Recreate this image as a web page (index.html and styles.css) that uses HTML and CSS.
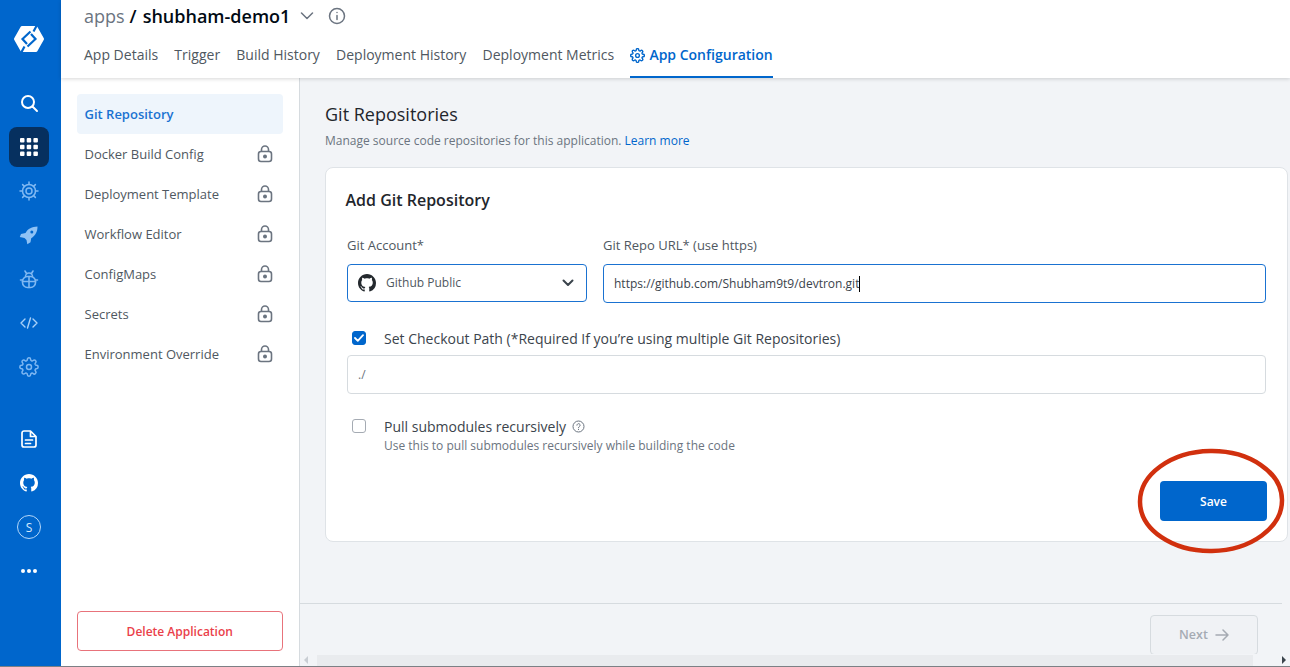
FILE: index.html
```html
<!DOCTYPE html>
<html lang="en">
<head>
  <meta charset="UTF-8">
  <title>shubham-demo1 - App Configuration</title>
  <link rel="stylesheet" href="styles.css">
</head>
<body>
  <aside class="sidebar">
    <div class="logo">
      <svg width="32" height="28" viewBox="0 0 32 28">
        <path d="M9 2.500h14l6.500 11.500-6.500 11.500H9L2.500 14z" fill="#fff" stroke="#fff" stroke-width="3" stroke-linejoin="round"/>
        <path d="M24 0 20.500 6.500M8 28l3.500-6.500" stroke="#0066cc" stroke-width="2.200"/>
        <path d="M17.500 6.500 9.500 14l4.500 5M14.500 21.500l8-7.500-4.500-5" fill="none" stroke="#0066cc" stroke-width="2.200"/>
      </svg>
    </div>
    <div class="side-item">
      <svg width="20" height="20" viewBox="0 0 20 20" fill="none" stroke="#fff" stroke-width="2" stroke-linecap="round"><circle cx="9" cy="9" r="6"/><path d="m13.500 13.500 4.500 4.500"/></svg>
    </div>
    <div class="side-item">
      <div class="side-active">
        <svg width="18" height="18" viewBox="0 0 18 18" fill="#fff">
          <rect x="0" y="0" width="4.500" height="4.500" rx="1"/><rect x="6.700" y="0" width="4.500" height="4.500" rx="1"/><rect x="13.400" y="0" width="4.500" height="4.500" rx="1"/>
          <rect x="0" y="6.700" width="4.500" height="4.500" rx="1"/><rect x="6.700" y="6.700" width="4.500" height="4.500" rx="1"/><rect x="13.400" y="6.700" width="4.500" height="4.500" rx="1"/>
          <rect x="0" y="13.400" width="4.500" height="4.500" rx="1"/><rect x="6.700" y="13.400" width="4.500" height="4.500" rx="1"/><rect x="13.400" y="13.400" width="4.500" height="4.500" rx="1"/>
        </svg>
      </div>
    </div>
    <div class="side-item">
      <svg width="20" height="20" viewBox="0 0 20 20" fill="none" stroke="#7fb8f2" stroke-width="1.500" stroke-linecap="round"><circle cx="10" cy="10" r="6.500"/><circle cx="10" cy="10" r="3"/><path d="M10 1v2.500M10 16.500V19M1 10h2.500M16.500 10H19M3.600 3.600l1.800 1.800M14.600 14.600l1.800 1.800M16.400 3.600l-1.800 1.800M5.400 14.600l-1.800 1.800"/></svg>
    </div>
    <div class="side-item">
      <svg width="20" height="20" viewBox="0 0 20 20"><path fill="#8fc2f5" d="M18.500 1.500c-5.500.2-9.500 2-12 6.500L2 9 .8 12l4.700 1 2 2 .8 4.300 3.200-2 .7-4.100c4.300-2.700 6.300-6.500 6.300-11.700z"/><circle cx="12.800" cy="7" r="1.500" fill="#0066cc"/></svg>
    </div>
    <div class="side-item">
      <svg width="20" height="20" viewBox="0 0 20 20" fill="none" stroke="#7fb8f2" stroke-width="1.600" stroke-linecap="round"><rect x="3.500" y="7.500" width="13" height="11" rx="5"/><path d="M6.500 7.500a3.500 3.500 0 0 1 7 0M10 7.500v11M3.500 12.500h13M1.500 11h2M16.500 11h2M6 2 7.500 4.500M14 2l-1.500 2.500"/></svg>
    </div>
    <div class="side-item">
      <svg width="18" height="12" viewBox="0 0 18 12" fill="none" stroke="#a9d1f8" stroke-width="1.400" stroke-linecap="round" stroke-linejoin="round"><path d="M5 2 1 6l4 4M13 2l4 4-4 4M10.500 1 7.500 11"/></svg>
    </div>
    <div class="side-item">
      <svg width="20" height="20" viewBox="0 0 24 24" fill="none" stroke="#7fb8f2" stroke-width="1.800" stroke-linecap="round" stroke-linejoin="round"><circle cx="12" cy="12" r="3"/><path d="M19.400 15a1.700 1.700 0 0 0 .3 1.800l.1.100a2 2 0 1 1-2.900 2.900l-.1-.1a1.700 1.700 0 0 0-2.800 1.200V21a2 2 0 1 1-4 0v-.1a1.700 1.700 0 0 0-2.900-1.200l-.1.100a2 2 0 1 1-2.800-2.900l.1-.1a1.700 1.700 0 0 0-1.200-2.800H3a2 2 0 1 1 0-4h.1a1.700 1.700 0 0 0 1.200-2.900l-.1-.1a2 2 0 1 1 2.900-2.800l.1.100a1.700 1.700 0 0 0 1.800.3H9a1.700 1.700 0 0 0 1-1.500V3a2 2 0 1 1 4 0v.1a1.700 1.700 0 0 0 2.900 1.200l.1-.1a2 2 0 1 1 2.800 2.900l-.1.100a1.700 1.700 0 0 0-.3 1.800V9a1.700 1.700 0 0 0 1.500 1H21a2 2 0 1 1 0 4h-.1a1.700 1.700 0 0 0-1.500 1z"/></svg>
    </div>
    <div class="side-item side-gap">
      <svg width="16" height="18" viewBox="0 0 16 18" fill="none" stroke="#fff" stroke-width="1.700" stroke-linecap="round" stroke-linejoin="round"><path d="M9.500 1H3a2 2 0 0 0-2 2v12a2 2 0 0 0 2 2h10a2 2 0 0 0 2-2V6.500zM9.500 1v5.500H15M4.500 10h7M4.500 13.500h5"/></svg>
    </div>
    <div class="side-item">
      <svg width="18" height="18" viewBox="0 0 16 16" fill="#fff"><path d="M8 0C3.580 0 0 3.580 0 8c0 3.540 2.290 6.530 5.470 7.590.4.070.55-.17.55-.38 0-.19-.01-.82-.01-1.490-2.010.37-2.530-.49-2.690-.94-.09-.23-.48-.94-.82-1.130-.28-.15-.68-.52-.01-.53.630-.01 1.080.58 1.230.82.720 1.210 1.870.87 2.330.66.070-.52.280-.87.510-1.070-1.780-.2-3.640-.89-3.640-3.950 0-.87.310-1.590.82-2.150-.08-.2-.36-1.020.08-2.120 0 0 .67-.21 2.200.82.640-.18 1.320-.27 2-.27s1.360.09 2 .27c1.530-1.040 2.200-.82 2.200-.82.44 1.100.16 1.920.08 2.120.51.560.82 1.270.82 2.150 0 3.070-1.870 3.750-3.650 3.950.29.25.54.73.54 1.480 0 1.070-.01 1.930-.01 2.200 0 .21.150.46.550.38A8.010 8.010 0 0 0 16 8c0-4.420-3.580-8-8-8z"/></svg>
    </div>
    <div class="side-item">
      <div class="avatar">S</div>
    </div>
    <div class="side-item">
      <svg width="18" height="6" viewBox="0 0 18 6" fill="#fff"><circle cx="3" cy="3" r="2"/><circle cx="9" cy="3" r="2"/><circle cx="15" cy="3" r="2"/></svg>
    </div>
  </aside>

  <div class="main">
    <header class="topbar">
      <div class="breadcrumb">
        <span class="crumb-apps">apps</span>
        <span class="crumb-sep">/</span>
        <span class="crumb-name">shubham-demo1</span>
        <svg class="crumb-chevron" width="14" height="8" viewBox="0 0 14 8" fill="none" stroke="#6b7480" stroke-width="1.500" stroke-linecap="round" stroke-linejoin="round"><path d="m1.500 1 5.500 5.500L12.500 1"/></svg>
        <svg class="crumb-info" width="18" height="18" viewBox="0 0 18 18" fill="none" stroke="#6b7480" stroke-width="1.500" stroke-linecap="round"><circle cx="9" cy="9" r="7.500"/><path d="M9 8.500v4M9 5.500v.1"/></svg>
      </div>
      <nav class="tabs">
        <a class="tab">App Details</a>
        <a class="tab">Trigger</a>
        <a class="tab">Build History</a>
        <a class="tab">Deployment History</a>
        <a class="tab">Deployment Metrics</a>
        <a class="tab tab-active">
          <svg width="15" height="15" viewBox="0 0 24 24" fill="none" stroke="#0066cc" stroke-width="2.200" stroke-linecap="round" stroke-linejoin="round"><circle cx="12" cy="12" r="3"/><path d="M19.400 15a1.700 1.700 0 0 0 .3 1.800l.1.100a2 2 0 1 1-2.900 2.900l-.1-.1a1.700 1.700 0 0 0-2.800 1.200V21a2 2 0 1 1-4 0v-.1a1.700 1.700 0 0 0-2.900-1.200l-.1.100a2 2 0 1 1-2.800-2.900l.1-.1a1.700 1.700 0 0 0-1.200-2.800H3a2 2 0 1 1 0-4h.1a1.700 1.700 0 0 0 1.200-2.900l-.1-.1a2 2 0 1 1 2.900-2.800l.1.100a1.700 1.700 0 0 0 1.800.3H9a1.700 1.700 0 0 0 1-1.500V3a2 2 0 1 1 4 0v.1a1.700 1.700 0 0 0 2.900 1.200l.1-.1a2 2 0 1 1 2.800 2.900l-.1.100a1.700 1.700 0 0 0-.3 1.800V9a1.700 1.700 0 0 0 1.500 1H21a2 2 0 1 1 0 4h-.1a1.700 1.700 0 0 0-1.500 1z"/></svg>
          App Configuration
        </a>
      </nav>
    </header>

    <div class="body-row">
      <nav class="config-nav">
        <a class="config-item config-active">Git Repository</a>
        <a class="config-item">Docker Build Config<svg class="lock" width="16" height="18" viewBox="0 0 16 18" fill="none" stroke="#6b7480" stroke-width="1.600"><rect x="1.500" y="6.500" width="13" height="10" rx="2.500"/><path d="M4.500 6.500V4.500a3.500 3.500 0 0 1 7 0v2"/><circle cx="8" cy="11.500" r="1.200" fill="#6b7480"/></svg></a>
        <a class="config-item">Deployment Template<svg class="lock" width="16" height="18" viewBox="0 0 16 18" fill="none" stroke="#6b7480" stroke-width="1.600"><rect x="1.500" y="6.500" width="13" height="10" rx="2.500"/><path d="M4.500 6.500V4.500a3.500 3.500 0 0 1 7 0v2"/><circle cx="8" cy="11.500" r="1.200" fill="#6b7480"/></svg></a>
        <a class="config-item">Workflow Editor<svg class="lock" width="16" height="18" viewBox="0 0 16 18" fill="none" stroke="#6b7480" stroke-width="1.600"><rect x="1.500" y="6.500" width="13" height="10" rx="2.500"/><path d="M4.500 6.500V4.500a3.500 3.500 0 0 1 7 0v2"/><circle cx="8" cy="11.500" r="1.200" fill="#6b7480"/></svg></a>
        <a class="config-item">ConfigMaps<svg class="lock" width="16" height="18" viewBox="0 0 16 18" fill="none" stroke="#6b7480" stroke-width="1.600"><rect x="1.500" y="6.500" width="13" height="10" rx="2.500"/><path d="M4.500 6.500V4.500a3.500 3.500 0 0 1 7 0v2"/><circle cx="8" cy="11.500" r="1.200" fill="#6b7480"/></svg></a>
        <a class="config-item">Secrets<svg class="lock" width="16" height="18" viewBox="0 0 16 18" fill="none" stroke="#6b7480" stroke-width="1.600"><rect x="1.500" y="6.500" width="13" height="10" rx="2.500"/><path d="M4.500 6.500V4.500a3.500 3.500 0 0 1 7 0v2"/><circle cx="8" cy="11.500" r="1.200" fill="#6b7480"/></svg></a>
        <a class="config-item">Environment Override<svg class="lock" width="16" height="18" viewBox="0 0 16 18" fill="none" stroke="#6b7480" stroke-width="1.600"><rect x="1.500" y="6.500" width="13" height="10" rx="2.500"/><path d="M4.500 6.500V4.500a3.500 3.500 0 0 1 7 0v2"/><circle cx="8" cy="11.500" r="1.200" fill="#6b7480"/></svg></a>
        <button class="delete-btn">Delete Application</button>
      </nav>

      <div class="content">
        <section class="repos">
          <h1 class="repos-title">Git Repositories</h1>
          <p class="repos-sub">Manage source code repositories for this application. <a class="link">Learn more</a></p>

          <div class="card">
            <h2 class="card-title">Add Git Repository</h2>
            <div class="field-row">
              <div class="field field-account">
                <div class="label">Git Account*</div>
                <div class="select">
                  <svg width="18" height="18" viewBox="0 0 16 16" fill="#24292e"><path d="M8 0C3.580 0 0 3.580 0 8c0 3.540 2.290 6.530 5.470 7.590.4.070.55-.17.55-.38 0-.19-.01-.82-.01-1.490-2.010.37-2.530-.49-2.690-.94-.09-.23-.48-.94-.82-1.130-.28-.15-.68-.52-.01-.53.630-.01 1.080.58 1.230.82.720 1.210 1.870.87 2.330.66.070-.52.280-.87.510-1.070-1.780-.2-3.640-.89-3.640-3.950 0-.87.310-1.590.82-2.150-.08-.2-.36-1.020.08-2.120 0 0 .67-.21 2.200.82.640-.18 1.320-.27 2-.27s1.360.09 2 .27c1.530-1.040 2.200-.82 2.200-.82.44 1.100.16 1.920.08 2.120.51.560.82 1.270.82 2.150 0 3.070-1.870 3.750-3.650 3.950.29.25.54.73.54 1.480 0 1.070-.01 1.930-.01 2.200 0 .21.150.46.550.38A8.010 8.010 0 0 0 16 8c0-4.420-3.580-8-8-8z"/></svg>
                  <span class="select-text">Github Public</span>
                  <svg class="select-arrow" width="12" height="8" viewBox="0 0 12 8" fill="none" stroke="#3b444c" stroke-width="2" stroke-linecap="round" stroke-linejoin="round"><path d="m1.500 1.500 4.500 4.500 4.500-4.500"/></svg>
                </div>
              </div>
              <div class="field field-url">
                <div class="label">Git Repo URL* (use https)</div>
                <div class="input input-focus">https://github.com/Shubham9t9/devtron.git<span class="caret"></span></div>
              </div>
            </div>

            <div class="check-row">
              <span class="checkbox checkbox-on">
                <svg width="10" height="8" viewBox="0 0 10 8" fill="none" stroke="#fff" stroke-width="1.800" stroke-linecap="round" stroke-linejoin="round"><path d="m1 4 2.800 2.800L9 1.200"/></svg>
              </span>
              <span class="check-label">Set Checkout Path (*Required If you’re using multiple Git Repositories)</span>
            </div>
            <div class="input input-path">./</div>

            <div class="check-row check-row-pull">
              <span class="checkbox"></span>
              <span class="check-label">Pull submodules recursively</span>
              <svg class="help" width="13" height="13" viewBox="0 0 13 13" fill="none" stroke="#6b7480" stroke-width="1"><circle cx="6.500" cy="6.500" r="5.500"/><path d="M4.900 5.200a1.600 1.600 0 1 1 2.400 1.400c-.5.300-.8.600-.8 1.100M6.500 9.300v.3" stroke-linecap="round"/></svg>
            </div>
            <div class="check-desc">Use this to pull submodules recursively while building the code</div>

            <div class="card-actions">
              <button class="save-btn">Save</button>
            </div>
          </div>
        </section>

        <footer class="footer">
          <button class="next-btn">Next
            <svg width="14" height="12" viewBox="0 0 14 12" fill="none" stroke="#a5abb3" stroke-width="1.500" stroke-linecap="round" stroke-linejoin="round"><path d="M1 6h12M8 1l5 5-5 5"/></svg>
          </button>
        </footer>
        <div class="hscroll">
          <span class="arrow-left"></span>
          <span class="hscroll-thumb"></span>
          <span class="arrow-right"></span>
        </div>
      </div>
    </div>
  </div>

  <!-- red circle drawn on the screenshot -->
  <svg class="annotation" width="150" height="108" viewBox="0 0 150 108" fill="none">
    <ellipse cx="74" cy="54" rx="71" ry="50" stroke="#d1300e" stroke-width="4.500" transform="rotate(-1 74 54)"/>
  </svg>
</body>
</html>
```

FILE: styles.css
```css
* {
  box-sizing: border-box;
}
html, body {
  height: 100%;
}
body {
  margin: 0;
  display: flex;
  height: 667px;
  overflow: hidden;
  border-bottom: 1px solid #7c8085;
  font-family: "Open Sans", "Liberation Sans", sans-serif;
  color: #3b444c;
  background: #fff;
}

/* left blue bar */
.sidebar {
  width: 61px;
  flex: none;
  background: #0066cc;
  display: flex;
  flex-direction: column;
}
.logo {
  height: 81px;
  padding: 25px 0 0 13px;
}
.side-item {
  height: 44px;
  display: flex;
  align-items: center;
  justify-content: center;
  padding-right: 3px;
}
.side-gap {
  margin-top: 28px;
}
.side-active {
  width: 40px;
  height: 40px;
  border-radius: 8px;
  background: #06305f;
  display: flex;
  align-items: center;
  justify-content: center;
}
.avatar {
  width: 24px;
  height: 24px;
  border-radius: 50%;
  border: 1px solid #b5d8fa;
  color: #d5e9fd;
  font-size: 12px;
  display: flex;
  align-items: center;
  justify-content: center;
}

.main {
  flex: 1;
  min-width: 0;
  display: flex;
  flex-direction: column;
}

/* header */
.topbar {
  height: 78px;
  flex: none;
  padding-left: 23px;
  background: #fff;
  box-shadow: 0 1px 4px rgba(0, 0, 0, 0.16);
  position: relative;
  z-index: 1;
}
.breadcrumb {
  height: 32px;
  display: flex;
  align-items: center;
  font-size: 18px;
}
.crumb-apps {
  color: #6b7480;
}
.crumb-sep {
  margin: 0 6px 0 5px;
  font-weight: 600;
  color: #000a14;
}
.crumb-name {
  font-weight: 600;
  color: #000a14;
}
.crumb-chevron {
  margin-left: 10px;
}
.crumb-info {
  margin-left: 14px;
}
.tabs {
  display: flex;
  gap: 16.200px;
  height: 46px;
}
.tab {
  font-size: 14px;
  line-height: 46px;
  color: #4f5861;
  height: 46px;
  white-space: nowrap;
}
.tab-active {
  color: #0066cc;
  font-weight: 600;
  border-bottom: 2px solid #0066cc;
  padding-top: 2px;
  display: flex;
  align-items: center;
  gap: 4px;
}

.body-row {
  flex: 1;
  min-height: 0;
  display: flex;
}

/* config list */
.config-nav {
  width: 239px;
  flex: none;
  padding: 16px 16px 15px 15.500px;
  background: #fff;
  border-right: 1px solid #d6dbdf;
  display: flex;
  flex-direction: column;
}
.config-item {
  height: 40px;
  padding: 0 10px 0 8px;
  display: flex;
  align-items: center;
  justify-content: space-between;
  font-size: 13px;
  color: #4f5861;
  border-radius: 4px;
}
.config-active {
  background: #eef5fc;
  color: #1a72d1;
  font-weight: 600;
}
.delete-btn {
  margin-top: auto;
  height: 40px;
  background: #fff;
  border: 1px solid #e8737b;
  border-radius: 4px;
  font-family: inherit;
  font-size: 12px;
  font-weight: 600;
  color: #ea3f4a;
}

/* main content */
.content {
  flex: 1;
  min-width: 0;
  background: #f2f4f7;
  display: flex;
  flex-direction: column;
}
.repos {
  flex: 1;
  padding: 24px 2px 0 25px;
}
.repos-title {
  margin: 0;
  font-size: 18px;
  line-height: 24px;
  font-weight: 400;
  color: #1f262c;
}
.repos-sub {
  margin: 6px 0 0;
  font-size: 12px;
  line-height: 18px;
  color: #6b7480;
}
.link {
  color: #0066cc;
}
.card {
  margin-top: 17px;
  height: 375px;
  padding: 20px 21px 0 19.500px;
  background: #fff;
  border: 1px solid #dfe3e7;
  border-radius: 8px;
}
.card-title {
  margin: 0;
  font-size: 16px;
  line-height: 24px;
  font-weight: 600;
  color: #1f262c;
}
.field-row {
  display: flex;
  gap: 16px;
  margin-top: 24px;
  padding-left: 1.500px;
  align-items: flex-start;
}
.field-account {
  width: 240px;
  flex: none;
}
.field-url {
  flex: 1;
}
.label {
  font-size: 13px;
  line-height: 18px;
  color: #4f5861;
  margin-bottom: 10px;
}
.select {
  height: 38px;
  border: 1px solid #1a72d1;
  border-radius: 4px;
  display: flex;
  align-items: center;
  padding: 0 12px 0 10px;
  font-size: 12px;
  color: #4f5861;
}
.select-text {
  margin: 0 0 2px 10px;
}
.select-arrow {
  margin-left: auto;
}
.input {
  height: 39px;
  border-radius: 4px;
  display: flex;
  align-items: center;
  padding: 0 10px;
  font-size: 12px;
  color: #3b444c;
}
.input-focus {
  border: 1px solid #1a72d1;
}
.caret {
  width: 1px;
  height: 16px;
  background: #000;
}
.input-path {
  margin-left: 1.500px;
  border: 1px solid #d6dbdf;
  color: #6b7480;
}
.check-row {
  display: flex;
  align-items: center;
  margin: 25px 0 7px 6.500px;
  height: 20px;
  font-size: 14px;
}
.check-row-pull {
  margin: 22px 0 0 6.500px;
}
.checkbox {
  width: 14px;
  height: 14px;
  flex: none;
  margin-right: 18px;
  border: 1px solid #a5abb3;
  border-radius: 3px;
  display: flex;
  align-items: center;
  justify-content: center;
}
.checkbox-on {
  background: #0066cc;
  border-color: #0066cc;
}
.check-label {
  color: #3b444c;
}
.help {
  margin-left: 6px;
}
.check-desc {
  margin-left: 38.500px;
  font-size: 12px;
  line-height: 20px;
  color: #6b7480;
}
.card-actions {
  display: flex;
  justify-content: flex-end;
  margin: 25px -1px 0 0;
}
.save-btn {
  width: 107px;
  height: 40px;
  background: #0066cc;
  border: none;
  border-radius: 4px;
  font-family: inherit;
  font-size: 12px;
  font-weight: 600;
  color: #fff;
}

/* footer */
.footer {
  margin-right: 8px;
  height: 51px;
  flex: none;
  padding: 11px 24px 0 0;
  border-top: 1px solid #d6dbdf;
  display: flex;
  justify-content: flex-end;
  align-items: flex-start;
}
.next-btn {
  width: 108px;
  height: 40px;
  background: #f0f2f5;
  border: 1px solid #d6dbdf;
  border-radius: 4px;
  font-family: inherit;
  font-size: 12.500px;
  font-weight: 600;
  color: #a5abb3;
  display: flex;
  align-items: center;
  justify-content: center;
  gap: 7px;
  padding-bottom: 2px;
}
.hscroll {
  height: 12px;
  flex: none;
  background: #f2f4f7;
  display: flex;
  align-items: center;
  padding: 0 4px;
}
.hscroll-thumb {
  flex: 1;
  height: 11px;
  margin: 0 29px 0 9px;
  background: #e9ebee;
}
.arrow-left {
  border: 4px solid transparent;
  border-left: 0;
  border-right: 4px solid #c9ced4;
}
.arrow-right {
  border: 4px solid transparent;
  border-right: 0;
  border-left: 4px solid #3b444c;
}

.annotation {
  position: absolute;
  left: 1137px;
  top: 447px;
}
```
